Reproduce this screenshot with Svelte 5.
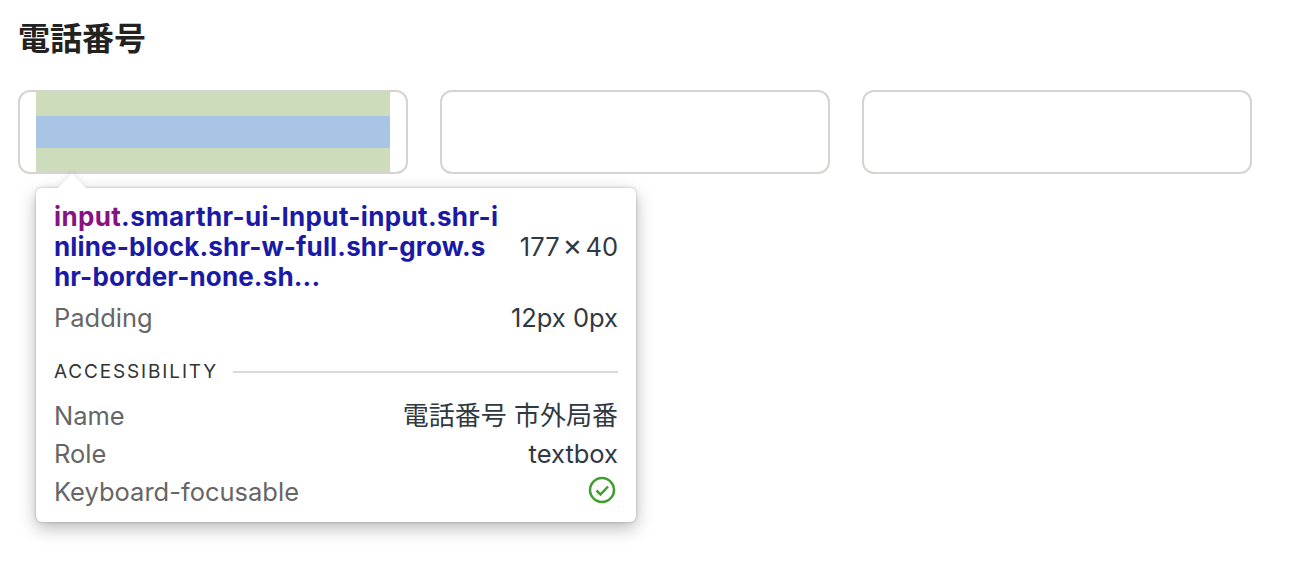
<script>
  const fields = [{ active: true }, { active: false }, { active: false }];

  const rows = [
    { label: 'Name', value: '電話番号 市外局番', cjk: true },
    { label: 'Role', value: 'textbox', cjk: false }
  ];
</script>

<main class="page">
  <h2 class="title">電話番号</h2>

  <div class="fields">
    {#each fields as field}
      <div class="field">
        {#if field.active}
          <div class="padding-box">
            <div class="content-box"></div>
          </div>
        {/if}
      </div>
    {/each}

    <div class="popover">
      <span class="arrow"></span>
      <div class="head">
        <div class="selector">
          <span class="first-line"><span class="tag">input</span>.smarthr-ui-Input-input.shr-i</span><br />nline-block.shr-w-full.shr-grow.s<br />hr-border-none.sh...
        </div>
        <div class="size">177<span class="times">×</span>40</div>
      </div>

      <div class="row padding-row">
        <span class="label">Padding</span>
        <span class="value">12px 0px</span>
      </div>

      <div class="section">
        <span class="section-title">ACCESSIBILITY</span>
        <span class="rule"></span>
      </div>

      {#each rows as row}
        <div class="row">
          <span class="label">{row.label}</span>
          <span class="value" class:cjk={row.cjk}>{row.value}</span>
        </div>
      {/each}

      <div class="row">
        <span class="label">Keyboard-focusable</span>
        <svg class="check" width="28" height="28" viewBox="0 0 28 28" fill="none" aria-hidden="true">
          <circle cx="14" cy="14" r="12" stroke="#3f9e2c" stroke-width="2.5" />
          <path d="M8.5 14.5l4 4 7.5-8" stroke="#3f9e2c" stroke-width="2.5" />
        </svg>
      </div>
    </div>
  </div>
</main>

<style>
  :global(body) {
    margin: 0;
    background: #fff;
    font-family: Inter, "Noto Sans CJK JP", sans-serif;
  }

  .page {
    padding: 17px 18px 0;
    height: 569px;
  }

  .title {
    margin: 0 0 35px;
    font-size: 32px;
    line-height: 38px;
    font-weight: 700;
    color: #23221f;
    font-family: "Noto Sans CJK JP", sans-serif;
  }

  .fields {
    position: relative;
    display: flex;
    gap: 32px;
  }

  .field {
    box-sizing: border-box;
    width: 390px;
    height: 84px;
    border: 2px solid #d6d3d0;
    border-radius: 12px;
    padding: 0 16px;
    background: #fff;
  }

  .padding-box {
    margin-top: -1px;
    padding: 25px 0 24px;
    background: #cddcbb;
  }

  .content-box {
    height: 32px;
    background: #a8c5e5;
  }

  .popover {
    position: absolute;
    left: 18px;
    top: 98px;
    box-sizing: border-box;
    width: 600px;
    height: 334px;
    padding: 14px 18px 0 18px;
    background: #fff;
    border-radius: 6px;
    box-shadow: 0 0 3px rgba(0, 0, 0, 0.25), 0 6px 18px rgba(0, 0, 0, 0.28);
    font-size: 25.5px;
    line-height: 38px;
  }

  .arrow {
    position: absolute;
    left: 26px;
    top: -10px;
    width: 20px;
    height: 20px;
    background: #fff;
    transform: rotate(45deg);
    box-shadow: -2px -2px 6px rgba(0, 0, 0, 0.07);
    clip-path: polygon(-30% -30%, 100% -30%, 100% 0, 0 100%, -30% 100%);
  }

  .head {
    display: flex;
    justify-content: space-between;
    align-items: center;
  }

  .selector {
    font-size: 26px;
    font-weight: 700;
    line-height: 30px;
    letter-spacing: 0.15px;
    color: #1a1aa6;
    white-space: nowrap;
  }

  .first-line {
    letter-spacing: 0.35px;
  }

  .tag {
    color: #881280;
  }

  .size,
  .value {
    color: #303942;
  }

  .size {
    margin-bottom: 2px;
  }

  .value.cjk {
    font-size: 26px;
  }

  .times {
    margin: 0 3px;
    font-size: 30px;
  }

  .row {
    display: flex;
    justify-content: space-between;
    align-items: center;
    height: 38px;
  }

  .padding-row {
    margin-top: 7px;
  }

  .label {
    color: #666;
  }

  .section {
    display: flex;
    align-items: center;
    gap: 15px;
    margin-top: 18px;
    margin-bottom: 8px;
    height: 34px;
  }

  .section-title {
    font-size: 19px;
    letter-spacing: 1.85px;
    color: #333;
  }

  .rule {
    flex: 1;
    height: 2px;
    background: #dadada;
  }

  .check {
    margin: 0 2px 4px 0;
  }
</style>
